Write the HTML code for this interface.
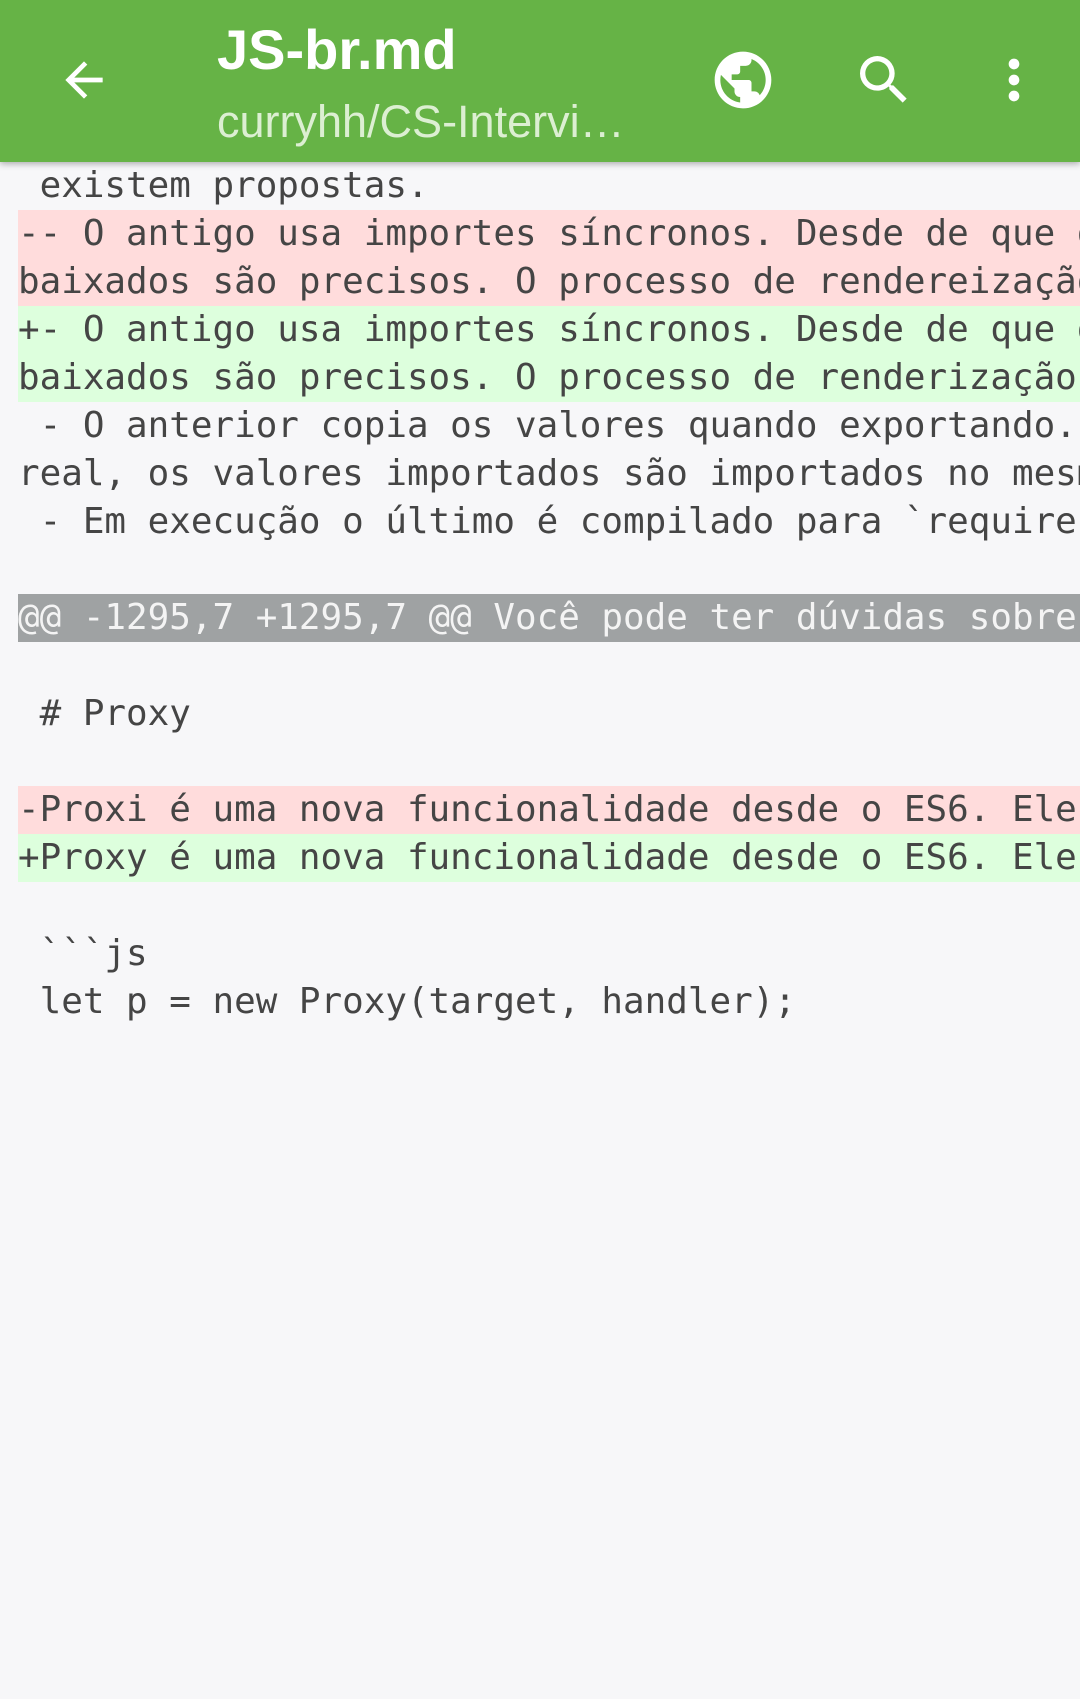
<!DOCTYPE html>
<html><head><meta charset="utf-8"><style>
body{margin:0;width:1080px;height:1699px;background:#f7f7f9;overflow:hidden;font-family:"Liberation Sans",sans-serif}
.bar{position:absolute;left:0;top:0;width:1080px;height:162px;background:#66b346;box-shadow:0 2px 6px rgba(0,0,0,.3);z-index:2}
.t1{position:absolute;left:217px;top:17px;color:#fff;font-size:56px;font-weight:bold}
.t2{position:absolute;left:217px;top:96px;color:#dcefd2;font-size:45px}
svg{position:absolute}
.code{position:absolute;left:18px;top:162px;right:0;font-family:"DejaVu Sans Mono","Liberation Mono",monospace;font-size:35.9px;color:#454545;overflow:hidden}
.l{height:48px;line-height:48px;overflow:hidden;white-space:pre}
.r{background:#ffdcdc}.g{background:#ddffdd}.h{background:#9fa2a3;color:#f4f4f4}
</style></head><body>
<div class="bar">
<svg style="left:56px;top:52px" width="56" height="56" viewBox="0 0 24 24"><path d="M20 11H7.83l5.59-5.59L12 4l-8 8 8 8 1.41-1.41L7.83 13H20z" fill="#fff"/></svg>
<div class="t1">JS-br.md</div>
<div class="t2">curryhh/CS-Intervi…</div>
<svg style="left:709px;top:46px" width="68" height="68" viewBox="0 0 24 24"><path d="M12 2C6.48 2 2 6.48 2 12s4.48 10 10 10 10-4.48 10-10S17.52 2 12 2zm-1 17.93c-3.95-.49-7-3.85-7-7.93 0-.62.08-1.21.21-1.79L9 15v1c0 1.1.9 2 2 2v1.93zm6.9-2.54c-.26-.81-1-1.39-1.9-1.39h-1v-3c0-.55-.45-1-1-1H8v-2h2c.55 0 1-.45 1-1V7h2c1.1 0 2-.9 2-2v-.41c2.93 1.19 5 4.06 5 7.41 0 2.08-.8 3.97-2.1 5.39z" fill="#fff"/></svg>
<svg style="left:852px;top:48px" width="64" height="64" viewBox="0 0 24 24"><path d="M15.5 14h-.79l-.28-.27A6.47 6.47 0 0016 9.5 6.5 6.5 0 109.5 16c1.61 0 3.09-.59 4.23-1.57l.27.28v.79l5 4.99L20.49 19l-4.99-5zm-6 0C7.01 14 5 11.99 5 9.5S7.01 5 9.5 5 14 7.01 14 9.5 11.99 14 9.5 14z" fill="#fff"/></svg>
<svg style="left:982px;top:48px" width="64" height="64" viewBox="0 0 24 24"><path d="M12 8c1.1 0 2-.9 2-2s-.9-2-2-2-2 .9-2 2 .9 2 2 2zm0 2c-1.1 0-2 .9-2 2s.9 2 2 2 2-.9 2-2-.9-2-2-2zm0 6c-1.1 0-2 .9-2 2s.9 2 2 2 2-.9 2-2-.9-2-2-2z" fill="#fff"/></svg>
</div>
<div class="code"><div class="l"> existem propostas.</div><div class="l r">-- O antigo usa importes síncronos. Desde de que os</div><div class="l r">baixados são precisos. O processo de rendereização</div><div class="l g">+- O antigo usa importes síncronos. Desde de que os</div><div class="l g">baixados são precisos. O processo de renderização</div><div class="l"> - O anterior copia os valores quando exportando. O</div><div class="l">real, os valores importados são importados no mesmo</div><div class="l"> - Em execução o último é compilado para &#96;require&#96;</div><div class="l"></div><div class="l h">@@ -1295,7 +1295,7 @@ Você pode ter dúvidas sobre</div><div class="l"></div><div class="l"> # Proxy</div><div class="l"></div><div class="l r">-Proxi é uma nova funcionalidade desde o ES6. Ele</div><div class="l g">+Proxy é uma nova funcionalidade desde o ES6. Ele</div><div class="l"></div><div class="l"> &#96;&#96;&#96;js</div><div class="l"> let p = new Proxy(target, handler);</div></div>
</body></html>
